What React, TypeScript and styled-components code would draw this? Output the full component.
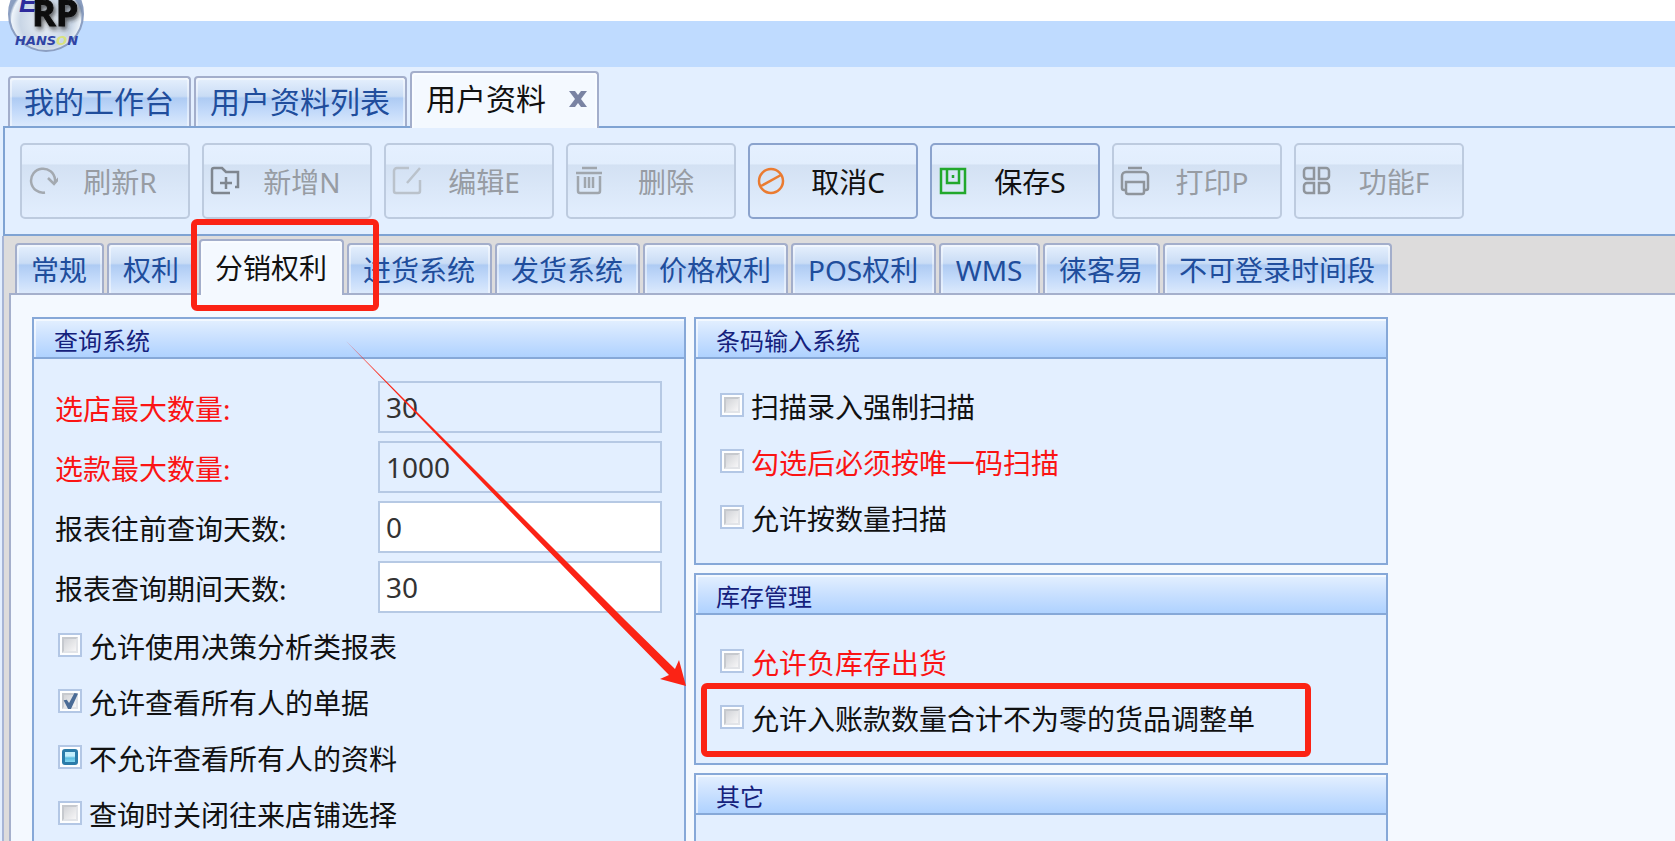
import React, { useEffect, useRef, useState } from 'react';
import styled, { createGlobalStyle, css } from 'styled-components';

const GlobalStyle = createGlobalStyle`
  *, *::before, *::after { box-sizing: border-box; }
  body {
    margin: 0;
    background: #f4f9ff;
    font-family: "Noto Sans", "Noto Sans CJK SC", sans-serif;
    color: #111;
  }
  button, input { font-family: inherit; }
`;

const Page = styled.div`
  position: relative;
  display: flex;
  flex-direction: column;
  height: 100vh;
  overflow: hidden;
  background: #e3efff;
`;

const TitleBar = styled.header`
  position: relative;
  flex: none;
  height: 67px;
  border-top: 21px solid #fff;
  background: #bfdbff;
`;

const Logo = styled.svg`
  position: absolute;
  left: 6px;
  top: -21px;
`;

const TabStrip = styled.nav<{ $sub?: boolean }>`
  position: relative;
  z-index: 1;
  display: flex;
  flex: none;
  align-items: flex-end;
  gap: 3px;
  height: ${p => (p.$sub ? 57 : 59)}px;
  padding-left: ${p => (p.$sub ? 6 : 8)}px;
`;

const TabButton = styled.button<{ $active?: boolean; $sub?: boolean; $min?: number }>`
  display: flex;
  align-items: center;
  justify-content: center;
  flex: none;
  gap: 22px;
  min-width: ${p => p.$min ?? 0}px;
  height: 50px;
  padding: ${p => (p.$sub ? 2 : 0)}px 15px 0 14px;
  border: 2px solid #a3aecb;
  border-bottom: 0;
  border-radius: 4px 4px 0 0;
  background: linear-gradient(#e6f0fd 0, #c9dcf5 38%, #aecbf3 42%, #c3dafa 70%, #dbe9fc 100%);
  box-shadow: inset 2px 2px 0 rgba(255, 255, 255, 0.45), inset -2px 0 0 rgba(255, 255, 255, 0.45);
  color: #204d9c;
  font-size: ${p => (p.$sub ? 28 : 30)}px;
  line-height: 36px;
  white-space: nowrap;
  ${p => p.$active && css`
    height: ${p.$sub ? 56 : 57}px;
    margin-bottom: -2px;
    padding-bottom: ${p.$sub ? 2 : 4}px;
    background: #f4f9ff;
    color: #111;
  `}
`;

const CloseMark = styled.svg`
  flex: none;
  margin-right: -6px;
`;

const Toolbar = styled.div`
  display: flex;
  flex: none;
  gap: 12px;
  margin-left: 3px;
  padding: 15px;
  border: solid #7fa3d3;
  border-width: 2px 0 2px 2px;
  background: #e3efff;
`;

const ToolButton = styled.button`
  display: flex;
  align-items: center;
  flex: none;
  width: 170px;
  height: 76px;
  padding: 0 6px 0 6px;
  border: 2px solid #8ba3cd;
  border-radius: 5px;
  background: linear-gradient(#e5f0ff 0, #e2eefd 26%, #d3e1f3 28%, #dae7f8 60%, #e2eefe 100%);
  color: #111;
  font-size: 28px;
  line-height: 36px;
  &:disabled {
    border-color: #bdcbdf;
    color: #979ca3;
  }
`;

const ToolIcon = styled.svg`
  flex: none;
  fill: none;
  stroke-width: 2.5;
`;

const ToolText = styled.span`
  flex: 1;
  padding-top: 2px;
  text-align: center;
`;

const WorkArea = styled.main`
  display: flex;
  flex: 1;
  flex-direction: column;
  min-height: 0;
  margin-left: 2px;
  padding-left: 5px;
  border-left: 2px solid #a7b5d6;
  background: #dddcdc;
`;

const Sheet = styled.div`
  display: grid;
  flex: 1;
  grid-template-columns: minmax(0, 654px) minmax(0, 694px);
  gap: 8px;
  min-height: 0;
  padding: 22px 21px 0;
  overflow: hidden;
  border: solid #a5b0cc;
  border-width: 2px 0 0 2px;
  background: #f4f9ff;
`;

const Column = styled.div`
  display: flex;
  flex-direction: column;
  gap: 8px;
  min-height: 600px;
`;

const Panel = styled.section<{ $fill?: boolean }>`
  flex: ${p => (p.$fill ? '1 0 auto' : 'none')};
  border: 2px solid #86a8d8;
  background: #e3efff;
`;

const PanelTitle = styled.h2`
  height: 40px;
  margin: 0;
  padding: 6px 20px 0;
  border-bottom: 2px solid #86a8d8;
  background: linear-gradient(#e4f0ff, #c9e0ff 50%, #afd2ff);
  box-shadow: inset 2px 2px 0 rgba(255, 255, 255, 0.6);
  color: #15217c;
  font-size: 24px;
  font-weight: 400;
  line-height: 32px;
`;

const Fields = styled.div`
  display: flex;
  flex-direction: column;
  gap: 8px;
  padding: 22px 22px 4px 21px;
`;

const Field = styled.div`
  display: flex;
  align-items: center;
`;

const FieldLabel = styled.label<{ $red?: boolean }>`
  flex: 0 0 323px;
  padding-top: 4px;
  color: ${p => (p.$red ? '#fb1414' : '#111')};
  font-size: 28px;
  line-height: 36px;
`;

const FieldInput = styled.input`
  flex: 1;
  min-width: 0;
  height: 52px;
  padding: 0 6px;
  border: 2px solid #b6c9e4;
  border-radius: 0;
  outline: 0;
  background: #fff;
  color: #333;
  font-size: 28px;
  &:read-only { background: #e3efff; }
`;

const CheckList = styled.div<{ $inset?: boolean }>`
  padding: ${p => (p.$inset ? '18px 24px' : '0 24px')};
`;

const CheckLabel = styled.label<{ $red?: boolean }>`
  display: flex;
  align-items: center;
  gap: 7px;
  height: 56px;
  color: ${p => (p.$red ? '#fb1414' : '#111')};
  font-size: 28px;
  line-height: 36px;
  white-space: nowrap;
`;

const CheckText = styled.span`
  padding-top: 4px;
`;

const CheckBox = styled.input`
  display: grid;
  flex: none;
  place-items: center;
  width: 24px;
  height: 24px;
  margin: 0;
  appearance: none;
  border: 2px solid #b3c7e5;
  background: #fdfeff;
  &::before {
    content: '';
    grid-area: 1 / 1;
    width: 16px;
    height: 16px;
    border: 2px solid #c6c9ce;
    border-right-color: #e2e4e8;
    border-bottom-color: #e2e4e8;
    background: linear-gradient(135deg, #d2d4d8, #f6f6f7);
  }
  &:checked::after {
    content: '';
    grid-area: 1 / 1;
    width: 16px;
    height: 16px;
    background: #4a6b96;
    clip-path: polygon(10% 45%, 30% 42%, 44% 62%, 78% 0, 100% 4%, 56% 100%, 38% 100%);
  }
  &:indeterminate::before {
    border: 3px solid #2b7ca9;
    border-radius: 3px;
    background: linear-gradient(#c3effc 0 40%, #59bce0 60%, #86d9f2);
  }
`;

const Markup = styled.svg`
  position: absolute;
  inset: 0;
  z-index: 2;
  width: 100%;
  height: 100%;
  pointer-events: none;
`;

type IconName = 'refresh' | 'add' | 'edit' | 'trash' | 'cancel' | 'save' | 'print' | 'grid';

const iconShapes: Record<IconName, React.ReactNode> = {
  refresh: <path d="M17 26.500a12 12 0 1 1 10-13v3M20 12l6 6 5-6" />,
  add: <path d="M20 27H4a2 2 0 0 1-2-2V4a2 2 0 0 1 2-2h8l4 4h12v15h-3M16 11v12M10 17h12" />,
  edit: <path d="M17 2H5a3 3 0 0 0-3 3v20a2 2 0 0 0 2 2h22a2 2 0 0 0 2-2V14M28 2L15 17" />,
  trash: <path d="M8 2h15M2 7h26M4 10v15a2 2 0 0 0 2 2h18a2 2 0 0 0 2-2V10M11 11v11M15 11v11M19 11v11" />,
  cancel: <><circle cx="15" cy="15" r="12" /><path d="M5 20l20-11" /></>,
  save: <path d="M3 3h24v24H3zM9 3v14h12V3M15 9v3" />,
  print: <path d="M8 2h14M6 24H4a2 2 0 0 1-2-2V10a4 4 0 0 1 4-4h18a4 4 0 0 1 4 4v12a2 2 0 0 1-2 2h-2M6 16h18v10a2 2 0 0 1-2 2H8a2 2 0 0 1-2-2z" />,
  grid: <path d="M5 2h7v11H5a3 3 0 0 1-3-3V5a3 3 0 0 1 3-3zM17 2h7a3 3 0 0 1 3 3v5a3 3 0 0 1-3 3h-7zM5 17h7v10H5a3 3 0 0 1-3-3v-4a3 3 0 0 1 3-3zM17 17h7a3 3 0 0 1 3 3v4a3 3 0 0 1-3 3h-7z" />,
};

const tools: { text: string; icon: IconName; color: string; enabled?: boolean }[] = [
  { text: '刷新R', icon: 'refresh', color: '#a3a9b0' },
  { text: '新增N', icon: 'add', color: '#7f868f' },
  { text: '编辑E', icon: 'edit', color: '#bac2cb' },
  { text: '删除', icon: 'trash', color: '#a0a6ad' },
  { text: '取消C', icon: 'cancel', color: '#ea7b31', enabled: true },
  { text: '保存S', icon: 'save', color: '#22a82c', enabled: true },
  { text: '打印P', icon: 'print', color: '#8f959c' },
  { text: '功能F', icon: 'grid', color: '#8f959c' },
];

const subTabs: { name: string; min?: number }[] = [
  { name: '常规' },
  { name: '权利' },
  { name: '分销权利' },
  { name: '进货系统' },
  { name: '发货系统' },
  { name: '价格权利' },
  { name: 'POS权利', min: 145 },
  { name: 'WMS', min: 101 },
  { name: '徕客易' },
  { name: '不可登录时间段' },
];

const fields = [
  { id: 'max-shops', label: '选店最大数量:', value: '30', red: true },
  { id: 'max-styles', label: '选款最大数量:', value: '1000', red: true },
  { id: 'days-back', label: '报表往前查询天数:', value: '0' },
  { id: 'days-range', label: '报表查询期间天数:', value: '30' },
];

function Check({ text, red, state }: { text: string; red?: boolean; state?: 'on' | 'mixed' }) {
  const box = useRef<HTMLInputElement>(null);
  useEffect(() => {
    if (box.current) box.current.indeterminate = state === 'mixed';
  }, [state]);
  return (
    <CheckLabel $red={red}>
      <CheckBox ref={box} type="checkbox" defaultChecked={state === 'on'} />
      <CheckText>{text}</CheckText>
    </CheckLabel>
  );
}

function Brand() {
  return (
    <Logo width="84" height="56" viewBox="0 0 84 56" role="img" aria-label="ERP HANSON">
      <defs>
        <radialGradient id="ball" cx="0.5" cy="0.6" r="0.5">
          <stop offset="0" stopColor="#f0f5fa" />
          <stop offset="0.7" stopColor="#c9d6e6" />
          <stop offset="0.93" stopColor="#eef4fa" />
          <stop offset="1" stopColor="#8a9fc0" />
        </radialGradient>
        <filter id="shade" x="-20%" y="-20%" width="140%" height="150%">
          <feDropShadow dx="2" dy="3" stdDeviation="2" floodColor="#222" floodOpacity="0.7" />
        </filter>
      </defs>
      <circle cx="40" cy="14" r="37" fill="url(#ball)" stroke="#8c9fc2" strokeWidth="2" />
      <text x="13" y="12" fontFamily="Liberation Sans" fontStyle="italic" fontWeight="700" fontSize="26" fill="#2d2a9c">E</text>
      <text x="26" y="26" fontFamily="Open Sans" fontWeight="700" fontSize="36" fill="#080808" stroke="#080808" filter="url(#shade)">RP</text>
      <text x="9" y="45" fontFamily="DejaVu Sans" fontStyle="italic" fontWeight="700" fontSize="13" fill="#2f43a5">
        HANS<tspan fill="#d9e27e">O</tspan>N
      </text>
    </Logo>
  );
}

export default function App() {
  const [active, setActive] = useState('分销权利');
  return (
    <Page>
      <GlobalStyle />
      <TitleBar><Brand /></TitleBar>
      <TabStrip>
        <TabButton>我的工作台</TabButton>
        <TabButton>用户资料列表</TabButton>
        <TabButton $active>
          用户资料
          <CloseMark width="20" height="18" viewBox="0 0 20 18">
            <path d="M1 1h6l3 4 3-4h6l-6 8 6 8h-6l-3-4-3 4H1l6-8z" fill="#7983a3" />
          </CloseMark>
        </TabButton>
      </TabStrip>
      <Toolbar role="toolbar">
        {tools.map(t => (
          <ToolButton key={t.text} disabled={!t.enabled}>
            <ToolIcon width="30" height="30" viewBox="0 0 30 30" stroke={t.color}>{iconShapes[t.icon]}</ToolIcon>
            <ToolText>{t.text}</ToolText>
          </ToolButton>
        ))}
      </Toolbar>
      <WorkArea>
        <TabStrip $sub>
          {subTabs.map(({ name, min }) => (
            <TabButton key={name} $sub $min={min} $active={name === active} onClick={() => setActive(name)}>{name}</TabButton>
          ))}
        </TabStrip>
        <Sheet>
          <Column>
            <Panel $fill>
              <PanelTitle>查询系统</PanelTitle>
              <Fields>
                {fields.map(f => (
                  <Field key={f.id}>
                    <FieldLabel htmlFor={f.id} $red={f.red}>{f.label}</FieldLabel>
                    <FieldInput id={f.id} defaultValue={f.value} readOnly={f.red} />
                  </Field>
                ))}
              </Fields>
              <CheckList>
                <Check text="允许使用决策分析类报表" />
                <Check text="允许查看所有人的单据" state="on" />
                <Check text="不允许查看所有人的资料" state="mixed" />
                <Check text="查询时关闭往来店铺选择" />
              </CheckList>
            </Panel>
          </Column>
          <Column>
            <Panel>
              <PanelTitle>条码输入系统</PanelTitle>
              <CheckList $inset>
                <Check text="扫描录入强制扫描" />
                <Check text="勾选后必须按唯一码扫描" red />
                <Check text="允许按数量扫描" />
              </CheckList>
            </Panel>
            <Panel>
              <PanelTitle>库存管理</PanelTitle>
              <CheckList $inset>
                <Check text="允许负库存出货" red />
                <Check text="允许入账款数量合计不为零的货品调整单" />
              </CheckList>
            </Panel>
            <Panel $fill>
              <PanelTitle>其它</PanelTitle>
            </Panel>
          </Column>
        </Sheet>
      </WorkArea>
      <Markup aria-hidden="true">
        <rect x="194" y="222" width="182" height="86" rx="3" fill="none" stroke="#fb2315" strokeWidth="6" />
        <rect x="704" y="686" width="604" height="68" rx="3" fill="none" stroke="#fb2315" strokeWidth="6" />
        <path d="M346 341L625 620L675 669L679 660L686 686L660 679L669 675L615 620Z" fill="#fb2315" />
      </Markup>
    </Page>
  );
}
